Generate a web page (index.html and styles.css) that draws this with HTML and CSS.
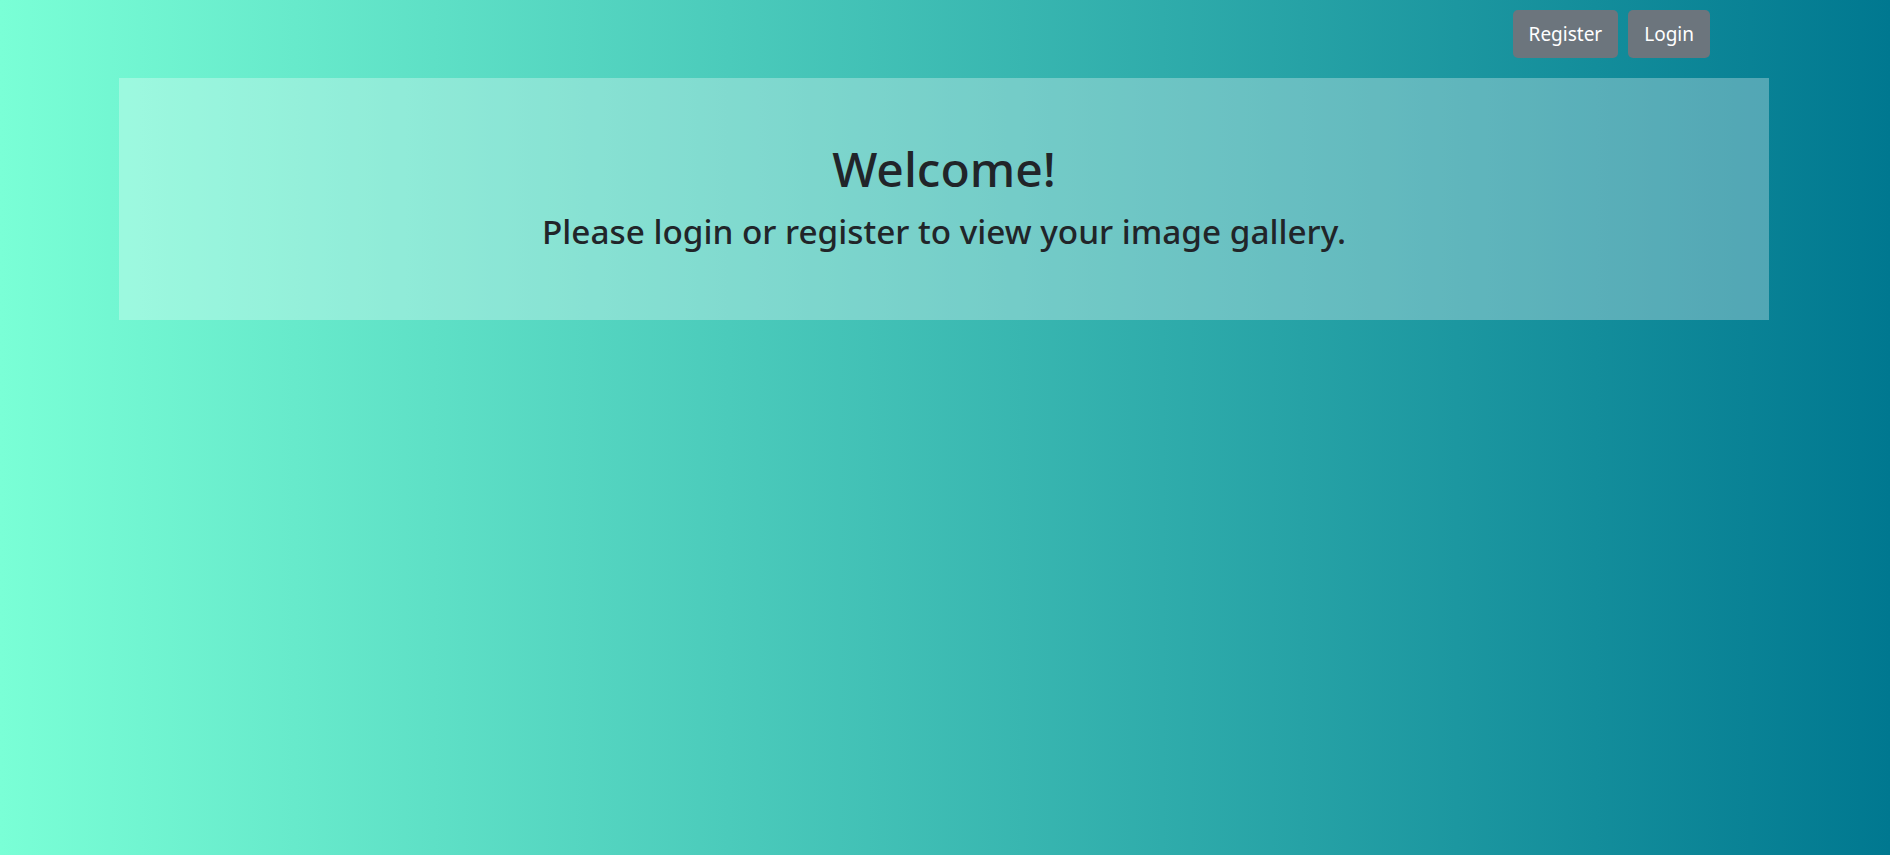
FILE: index.html
```html
<!DOCTYPE html>
<html lang="en">
<head>
<meta charset="utf-8">
<title>Image Gallery</title>
<link rel="stylesheet" href="styles.css">
</head>
<body>
<nav class="topbar">
  <a class="btn" href="#">Register</a>
  <a class="btn" href="#">Login</a>
</nav>
<main class="hero">
  <h1 class="hero-title">Welcome!</h1>
  <h2 class="hero-sub">Please login or register to view your image gallery.</h2>
</main>
</body>
</html>
```
FILE: styles.css
```css
html, body {
  margin: 0;
  padding: 0;
}
body {
  min-height: 100vh;
  background: linear-gradient(to right, #7affd6, #007890);
  font-family: "Noto Sans", "Open Sans", sans-serif;
  color: #212529;
}
.topbar {
  display: flex;
  justify-content: flex-end;
  gap: 10px;
  padding: 10px 180px 0 0;
}
.btn {
  display: inline-block;
  box-sizing: border-box;
  height: 48px;
  padding: 0 16px;
  line-height: 48px;
  font-size: 19px;
  color: #fff;
  background: #6c757d;
  border-radius: 5px;
  text-decoration: none;
}
.hero {
  margin: 20px 121px 0 119px;
  background: rgba(255, 255, 255, 0.3);
  padding: 61px 0 68px;
  text-align: center;
}
.hero-title {
  margin: 0;
  font-size: 48px;
  font-weight: 500;
  line-height: 60px;
}
.hero-sub {
  margin: 11px 0 0;
  font-size: 33.3px;
  font-weight: 500;
  line-height: 42px;
}
```
